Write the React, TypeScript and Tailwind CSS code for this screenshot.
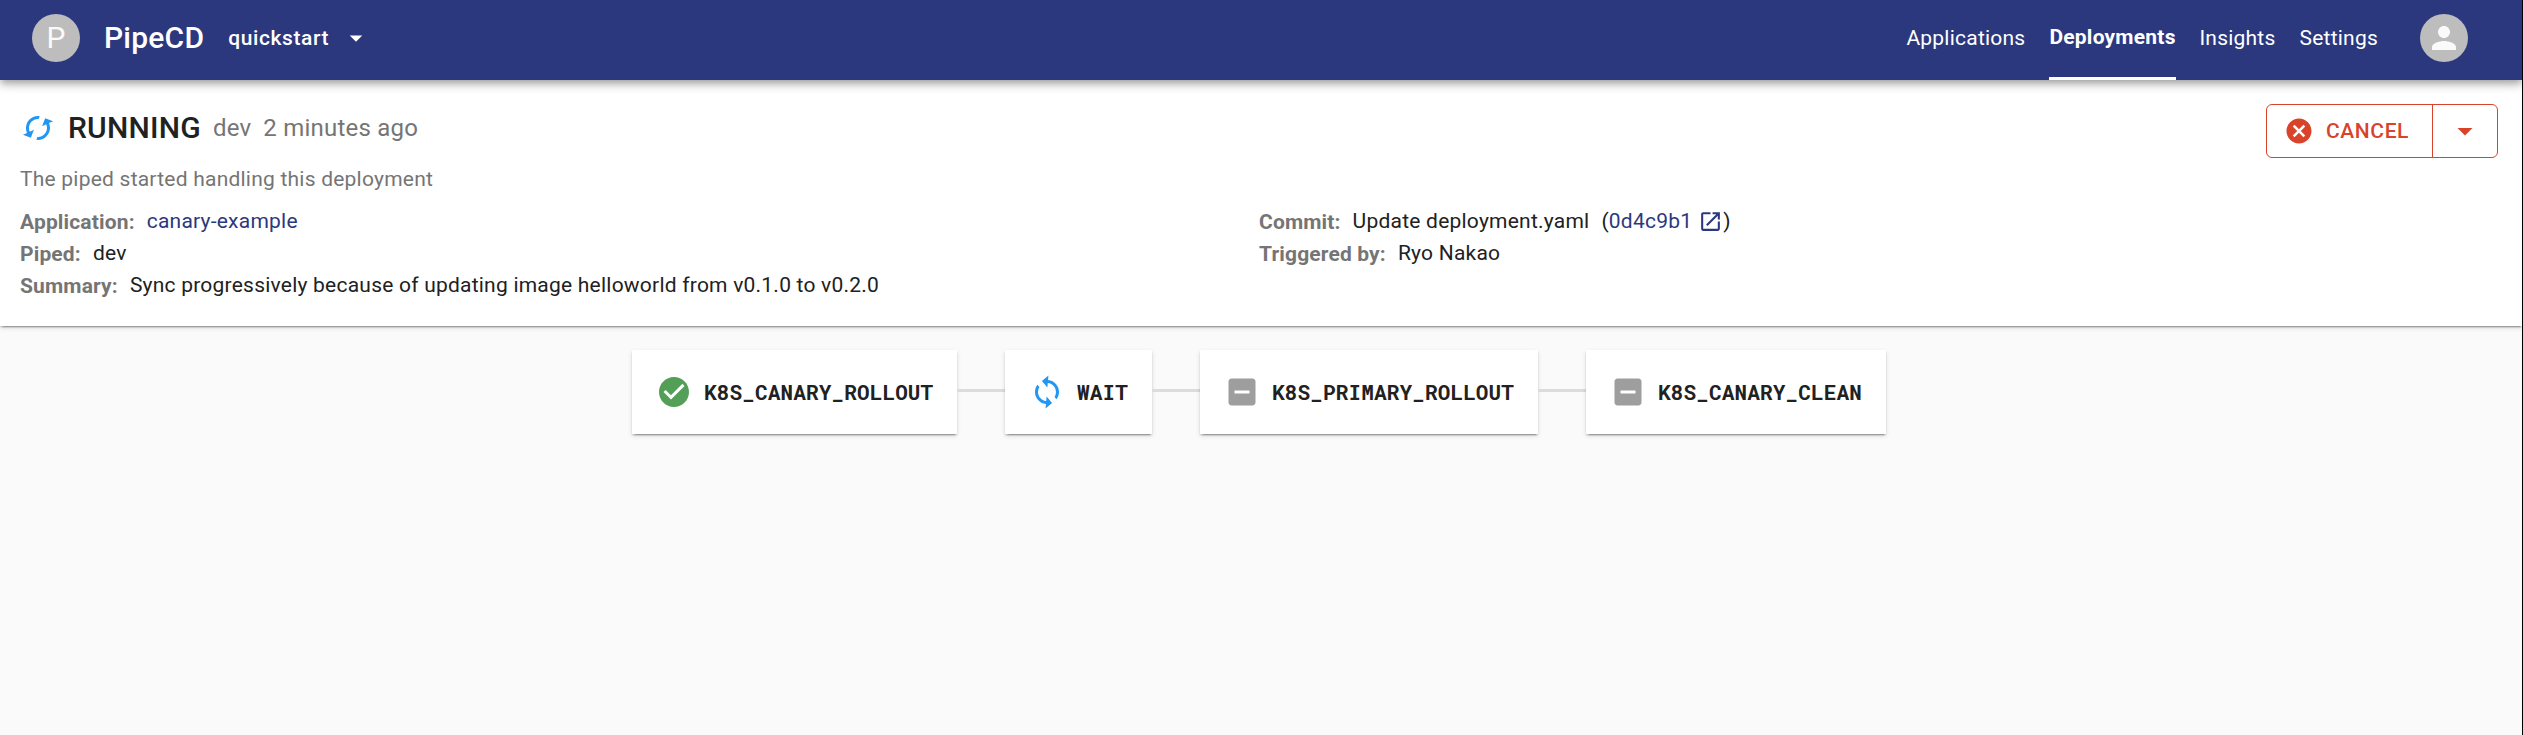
import React from "react";

function Icon({ d, className }: { d: string; className: string }) {
  return (
    <svg viewBox="0 0 24 24" fill="currentColor" className={className}>
      <path d={d} />
    </svg>
  );
}

const DROP = "M7 10l5 5 5-5z";
const PERSON =
  "M12 12c2.21 0 4-1.79 4-4s-1.79-4-4-4-4 1.79-4 4 1.79 4 4 4zm0 2c-2.67 0-8 1.34-8 4v2h16v-2c0-2.66-5.33-4-8-4z";
const CANCEL =
  "M12 2C6.47 2 2 6.47 2 12s4.47 10 10 10 10-4.47 10-10S17.53 2 12 2zm5 13.59L15.59 17 12 13.41 8.41 17 7 15.59 10.59 12 7 8.41 8.41 7 12 10.59 15.59 7 17 8.41 13.41 12 17 15.59z";
const CYCLE =
  "M12 4V1L8 5l4 4V6c3.31 0 6 2.69 6 6 0 1.01-.25 1.97-.7 2.8l1.46 1.46C19.54 15.03 20 13.57 20 12c0-4.42-3.58-8-8-8zm0 14c-3.31 0-6-2.69-6-6 0-1.01.25-1.97.7-2.8L5.24 7.74C4.46 8.97 4 10.43 4 12c0 4.42 3.58 8 8 8v3l4-4-4-4v3z";
const CHECK =
  "M12 2C6.48 2 2 6.48 2 12s4.48 10 10 10 10-4.48 10-10S17.52 2 12 2zm-2 15l-5-5 1.41-1.41L10 14.17l7.59-7.59L19 8l-9 9z";
const MINUS =
  "M19 3H5c-1.1 0-2 .9-2 2v14c0 1.1.9 2 2 2h14c1.1 0 2-.9 2-2V5c0-1.1-.9-2-2-2zm-2 10H7v-2h10v2z";
const OPEN =
  "M19 19H5V5h7V3H5c-1.11 0-2 .9-2 2v14c0 1.1.89 2 2 2h14c1.1 0 2-.9 2-2v-7h-2v7zM14 3v2h3.59l-9.83 9.83 1.41 1.41L19 6.41V10h2V3h-7z";

function Field({ label, children }: { label: string; children: React.ReactNode }) {
  return (
    <div className="flex h-8 items-center">
      <span className="mr-3 pt-[2px] font-bold tracking-[0.00714em] text-[#757575]">{label}</span>
      {children}
    </div>
  );
}

function Stage({ icon, color, name, width }: { icon: string; color: string; name: string; width: string }) {
  return (
    <div
      className={`flex h-[84px] items-center bg-white pl-6 shadow-[0_3px_1.5px_-1.5px_rgba(0,0,0,0.2),0_1.5px_1.5px_rgba(0,0,0,0.14),0_1.5px_4.5px_rgba(0,0,0,0.12)] ${width}`}
    >
      <Icon d={icon} className={`size-9 shrink-0 ${color}`} />
      <span className="ml-3 font-['Roboto_Mono','DejaVu_Sans_Mono',monospace] text-[21px] font-bold tracking-[0.14px]">
        {name}
      </span>
    </div>
  );
}

const Link = () => <div className="mt-[39px] h-[3px] w-12 bg-[#dcdcdc]" />;

export default function App() {
  return (
    <div className="flex h-[735px] w-[2523px] bg-[#fafafa] font-['Roboto',sans-serif] text-[21px] leading-8 tracking-[0.01071em] text-[#212121]">
      <div className="flex min-w-0 flex-1 flex-col">
        <header className="z-10 flex h-20 shrink-0 items-center bg-[#2c387e] pl-8 pr-[54px] text-white shadow-[0_3px_6px_-1.5px_rgba(0,0,0,0.2),0_6px_7.5px_rgba(0,0,0,0.14),0_1.5px_15px_rgba(0,0,0,0.12)]">
          <div className="mb-1 flex size-12 items-center justify-center rounded-full bg-[#bdbdbd] text-[30px] text-[#fafafa]">
            P
          </div>
          <div className="mb-1 ml-6 text-[30px] font-medium tracking-[0.0075em]">PipeCD</div>
          <div className="mb-1 ml-6 font-medium tracking-[0.02857em]">quickstart</div>
          <Icon d={DROP} className="mb-1 ml-3 size-[30px]" />
          <nav className="ml-auto flex h-full gap-6">
            <a className="flex h-full items-center pb-1">Applications</a>
            <a className="flex h-full w-[127px] items-center border-b-[3px] pb-[3px] font-bold">Deployments</a>
            <a className="-ml-px flex h-full items-center pb-1">Insights</a>
            <a className="flex h-full items-center pb-1">Settings</a>
          </nav>
          <div className="mb-1 ml-[42px] flex size-12 items-center justify-center rounded-full bg-[#bdbdbd] text-[#fafafa]">
            <Icon d={PERSON} className="size-9" />
          </div>
        </header>
        <section className="z-[5] flex h-[246px] shrink-0 flex-col bg-white pl-5 pr-6 shadow-[0_3px_1.5px_-1.5px_rgba(0,0,0,0.2),0_1.5px_1.5px_rgba(0,0,0,0.14),0_1.5px_4.5px_rgba(0,0,0,0.12)]">
          <div className="flex justify-between">
            <div className="mt-3 flex h-12 items-center pt-6">
              <Icon d={CYCLE} className="size-9 rotate-[66deg] text-[#2196f3]" />
              <span className="ml-3 text-[30px] font-medium tracking-[0.0075em]">RUNNING</span>
              <span className="ml-3 text-[24px] tracking-[0.00938em] text-[#757575]">dev</span>
              <span className="ml-3 text-[24px] tracking-[0.00938em] text-[#757575]">2 minutes ago</span>
            </div>
            <div className="mt-6 flex h-[54px] w-[232px] rounded-md border border-[#d9432a] text-[#d9432a]">
              <div className="flex w-[165px] items-center pl-[17px] text-[21px] font-medium tracking-[0.02857em]">
                <Icon d={CANCEL} className="mr-3 size-[30px]" />
                CANCEL
              </div>
              <div className="flex flex-1 items-center justify-center border-l border-[#d9432a]">
                <Icon d={DROP} className="size-9" />
              </div>
            </div>
          </div>
          <div className="mt-[5px] text-[#757575]">The piped started handling this deployment</div>
          <div className="mt-[10px] flex">
            <div className="w-[1239px]">
              <Field label="Application:">
                <span className="text-[#2c387e]">canary-example</span>
              </Field>
              <Field label="Piped:">dev</Field>
              <Field label="Summary:">
                Sync progressively because of updating image helloworld from v0.1.0 to v0.2.0
              </Field>
            </div>
            <div>
              <Field label="Commit:">
                <span>Update deployment.yaml</span>
                <span className="ml-3">(</span>
                <span className="text-[#2c387e]">0d4c9b1</span>
                <Icon d={OPEN} className="ml-1.5 size-[25px] text-[#2c387e]" />
                <span>)</span>
              </Field>
              <Field label="Triggered by:">Ryo Nakao</Field>
            </div>
          </div>
        </section>
        <main className="flex pl-[632px] pt-6">
          <Stage icon={CHECK} color="text-[#549f57]" name="K8S_CANARY_ROLLOUT" width="w-[325px]" />
          <Link />
          <Stage icon={CYCLE} color="text-[#2196f3] rotate-[5deg]" name="WAIT" width="w-[147px]" />
          <Link />
          <Stage icon={MINUS} color="text-[#9e9e9e]" name="K8S_PRIMARY_ROLLOUT" width="w-[338px]" />
          <Link />
          <Stage icon={MINUS} color="text-[#9e9e9e]" name="K8S_CANARY_CLEAN" width="w-[300px]" />
        </main>
      </div>
      <div className="w-px bg-black" />
    </div>
  );
}
